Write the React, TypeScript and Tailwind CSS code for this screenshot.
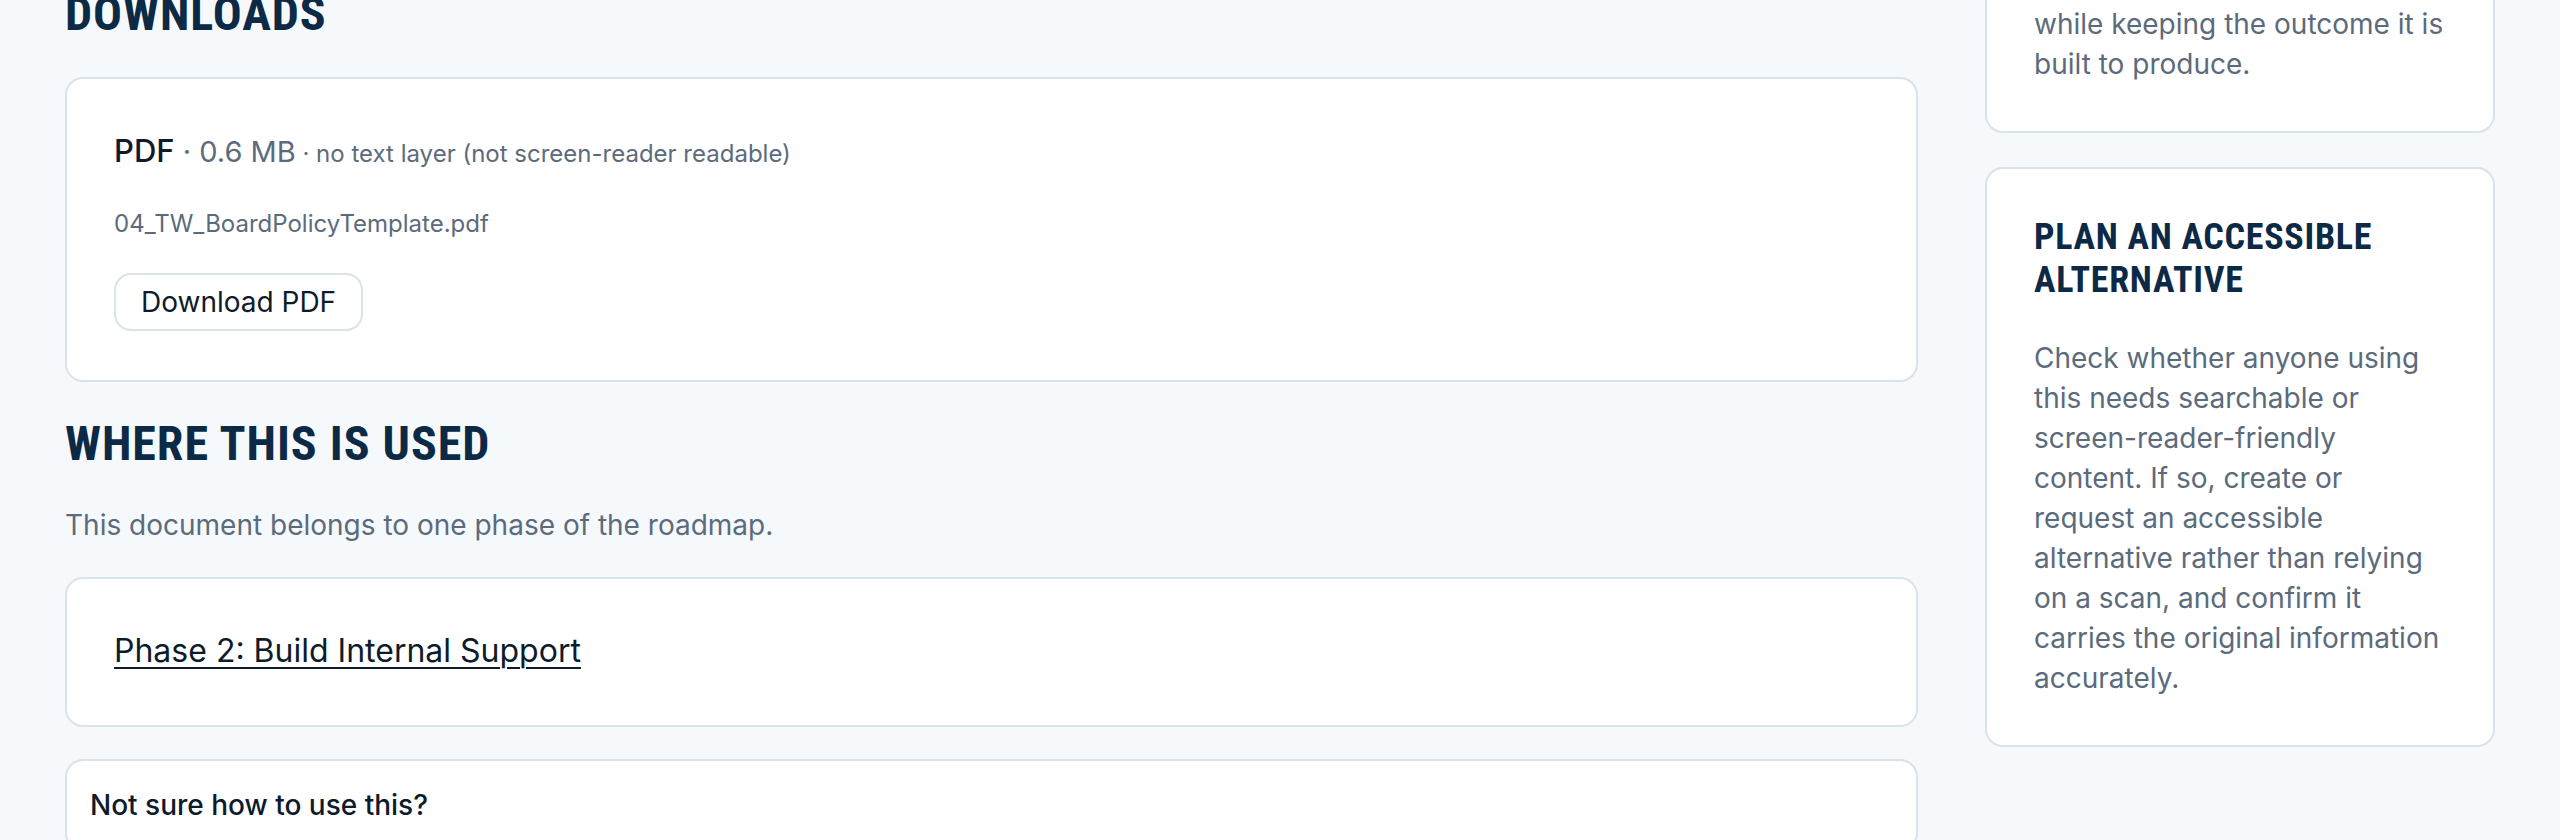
import React from 'react';

const heading = "font-['Roboto_Condensed','Roboto','DejaVu_Sans_Condensed',sans-serif] [font-stretch:75%] font-bold uppercase text-[#0c2945]";
const body = "font-['Inter','Noto_Sans',sans-serif]";
const card = 'rounded-[18px] border-2 border-[#d9e3eb] bg-white';

function SideCard({ title, children }: { title?: string; children: React.ReactNode }) {
  return (
    <div className={`${card} px-[47px] py-[47px]`}>
      {title && (
        <h3 className={`${heading} text-[36px] leading-[1.2] tracking-[0.02em] mb-[36px]`}>{title}</h3>
      )}
      <p className="text-[28px] leading-[40px] text-[#5b6b7c]">{children}</p>
    </div>
  );
}

export default function App() {
  return (
    <div className={`${body} h-[840px] overflow-hidden bg-[#f5f9fc]`}>
      <div className="grid grid-cols-[1fr_510px] gap-x-[67px] px-[65px]">
        {/* Main column */}
        <main className="mt-[-15px] flex flex-col">
          <h2 className={`${heading} text-[48px] leading-[1.2] tracking-[0.02em] mb-[34px]`}>Downloads</h2>

          <section className={`${card} px-[47px] pt-[47px] pb-[49px]`}>
            <p className="text-[29px] leading-[50px] text-[#5b6b7c]">
              <span className="text-[31px] font-medium text-[#0d1b2a]">PDF</span>
              <span> · 0.6 MB</span>
              <span className="text-[24px]"> · no text layer (not screen-reader readable)</span>
            </p>
            <p className="mt-[26px] text-[24px] leading-[38px] text-[#5b6b7c]">04_TW_BoardPolicyTemplate.pdf</p>
            <div className="mt-[30px]">
              <button className="rounded-[17px] border-2 border-[#d9e3eb] bg-white px-[25px] py-[7px] text-[28px] leading-[40px] text-[#0d1b2a]">
                Download PDF
              </button>
            </div>
          </section>

          <h2 className={`${heading} mt-[33px] mb-[31px] text-[48px] leading-[1.2] tracking-[0.02em]`}>Where this is used</h2>
          <p className="text-[28px] leading-[44.8px] text-[#5b6b7c] mb-[29px]">
            This document belongs to one phase of the roadmap.
          </p>

          <section className={`${card} px-[47px] pt-[47px] pb-[49px]`}>
            <a href="#" className="text-[32px] leading-[50px] text-[#0d1b2a] underline underline-offset-[5px] decoration-[2px]">
              Phase 2: Build Internal Support
            </a>
          </section>

          <section className={`${card} mt-[32px] px-[23px] py-[23px]`}>
            <p className="text-[28px] leading-[42px] font-medium text-[#0d1b2a]">Not sure how to use this?</p>
          </section>
        </main>

        {/* Sidebar */}
        <aside className="mt-[-45px] flex flex-col gap-[34px]">
          <SideCard>
            while keeping the outcome it is built to produce.
          </SideCard>
          <SideCard title="Plan an accessible alternative">
            Check whether anyone using this needs searchable or screen-reader-friendly content. If so, create or
            request an accessible alternative rather than relying on a scan, and confirm it carries the original
            information accurately.
          </SideCard>
        </aside>
      </div>
    </div>
  );
}
